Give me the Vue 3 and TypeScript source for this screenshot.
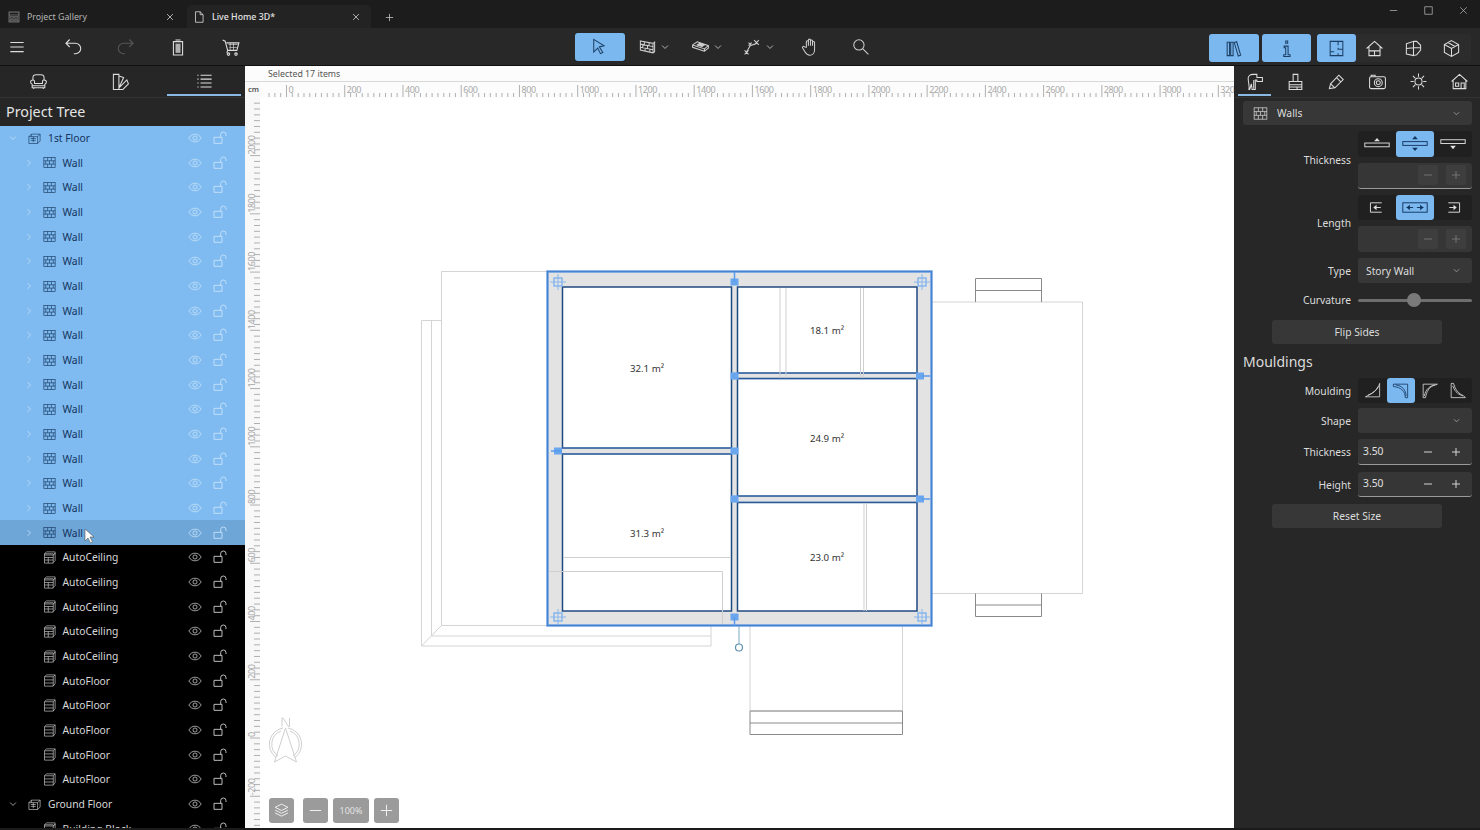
<script setup lang="ts">
interface Row { label: string; icon: string; level: number; chevron: '' | 'down' | 'right'; state: string }
const rows: Row[] = [{ label: '1st Floor', icon: 'floor', level: 0, chevron: 'down', state: 'sel' }]
for (let i = 0; i < 15; i++) rows.push({ label: 'Wall', icon: 'wall', level: 1, chevron: 'right', state: 'sel' })
rows.push({ label: 'Wall', icon: 'wall', level: 1, chevron: 'right', state: 'sel hov' })
for (let i = 0; i < 5; i++) rows.push({ label: 'AutoCeiling', icon: 'ceil', level: 1, chevron: '', state: '' })
for (let i = 0; i < 5; i++) rows.push({ label: 'AutoFloor', icon: 'afloor', level: 1, chevron: '', state: '' })
rows.push({ label: 'Ground Floor', icon: 'floor', level: 0, chevron: 'down', state: '' })
rows.push({ label: 'Building Block', icon: 'ceil', level: 1, chevron: '', state: '' })

const xAt = (cm: number) => 286.5 + cm * 0.2912
const yAt = (cm: number) => 738 - cm * 0.2912
const xTicks: { x: number; major: boolean }[] = []
for (let c = -60; c <= 3260; c += 20) xTicks.push({ x: xAt(c), major: c % 200 === 0 })
const yTicks: { y: number; major: boolean }[] = []
for (let c = -300; c <= 2200; c += 20) yTicks.push({ y: yAt(c), major: c % 200 === 0 })
const xLabels: number[] = []
for (let c = 0; c <= 3200; c += 200) xLabels.push(c)
const yLabels: number[] = []
for (let c = -200; c <= 2000; c += 200) yLabels.push(c)

const areas = [
  { t: '32.1 m²', x: 647, y: 371.5 },
  { t: '31.3 m²', x: 647, y: 536.5 },
  { t: '18.1 m²', x: 827, y: 333.5 },
  { t: '24.9 m²', x: 827, y: 441.5 },
  { t: '23.0 m²', x: 827, y: 561 }
]
const blocks = [
  [734.5, 282], [734.5, 617], [734.5, 376], [920, 376], [734.5, 451], [558, 451], [734.5, 499], [920, 499]
]
const corners = [[558, 282], [922, 282], [558, 617], [922, 617]]
</script>

<template>
  <div class="app">
    <svg class="defs" width="0" height="0">
      <defs>
        <symbol id="menu" viewBox="0 0 24 24"><path d="M4 6.500h16M4 12h16M4 17.500h16" /></symbol>
        <symbol id="undo" viewBox="0 0 24 24"><path d="M8 3L3.500 7.500 8 12M3.500 7.500H15a5.500 5.500 0 0 1 0 12.500h-2" /></symbol>
        <symbol id="redo" viewBox="0 0 24 24"><path d="M16 3l4.500 4.500L16 12M20.500 7.500H9a5.500 5.500 0 0 0 0 12.500h2" /></symbol>
        <symbol id="trash" viewBox="0 0 24 24"><path d="M9 3.500h6M6.500 5.500h11v16h-11z" /><rect x="9" y="8" width="6" height="11" fill="currentColor" stroke="none" opacity=".75" /></symbol>
        <symbol id="cart" viewBox="0 0 24 24"><path d="M2 3.500l3 1.500 3 11h11l2.500-9H6.500M8 16l-1 3" /><circle cx="9" cy="20.500" r="1.500" /><circle cx="18" cy="20.500" r="1.500" /><path d="M9 9h11M10 12.500h9M11 7v9M15 7v9" stroke-width=".8" /></symbol>
        <symbol id="doc" viewBox="0 0 24 24"><path d="M6 3h8l5 5v13H6zM14 3v5h5" /></symbol>
        <symbol id="gallery" viewBox="0 0 24 24"><rect x="3.500" y="3.500" width="17" height="17" /><path d="M3.500 8.500h17M6 11h5v3H6zM13 11h5v3h-5zM6 16h5v2.500H6zM13 16h5v2.500h-5z" stroke-width="1" /></symbol>
        <symbol id="arrow" viewBox="0 0 24 24"><path d="M6 3l13 8-6 1.500 4.500 7-3 1.500-3.500-7L6 19z" /></symbol>
        <symbol id="maxbox" viewBox="0 0 24 24"><rect x="4" y="4" width="16" height="16" /></symbol>
        <symbol id="bricks" viewBox="0 0 24 24"><path d="M3 5l16 3 2-1.500v12L19 20 3 16.500zM19 8v12M3 9l16 3M3 13l16 3M8 6v4M14 7v4M6 10v4M12 11v4M9 14v3M15 15v4" /></symbol>
        <symbol id="slab" viewBox="0 0 24 24"><path d="M2 10l6-4 14 5v3l-5 4-15-5zM2 13l15 5M17 15v3M17 15L2 10M17 15l5-4" /><path d="M8 10l6 2 3-2-6-2z" fill="currentColor" /></symbol>
        <symbol id="nodes" viewBox="0 0 24 24"><path d="M4 20l5-9 9-3M14 4l6 6M20 4l-6 6M2 17l5 5M7 17l-5 5M7 7l4 4M11 7l-4 4" /></symbol>
        <symbol id="hand" viewBox="0 0 24 24"><path d="M8 13V6a1.300 1.300 0 0 1 2.600 0v5-7a1.300 1.300 0 0 1 2.600 0v7-6a1.300 1.300 0 0 1 2.600 0v6-4a1.300 1.300 0 0 1 2.600 0v9c0 4-2.500 7-6 7-3 0-4.500-1.500-6-4l-3-5c-1-1.500 1-3 2.300-1.500z" /></symbol>
        <symbol id="search" viewBox="0 0 24 24"><circle cx="10" cy="10" r="6.500" /><path d="M15 15l7 7" /></symbol>
        <symbol id="library" viewBox="0 0 24 24"><path d="M4 4h3v17H4zM8.500 4h3v17h-3zM13 4.500l3-1 5 17-3 1z" /></symbol>
        <symbol id="info" viewBox="0 0 24 24"><path d="M11 2.500h2.500v3H11zM9 9h5v11h2.500v2h-8v-2H11v-9H9z" /></symbol>
        <symbol id="plan" viewBox="0 0 24 24"><path d="M4 3h16v18H4zM14 3v5M14 11v2h6M4 16h5M14 18v3" /></symbol>
        <symbol id="house" viewBox="0 0 24 24"><path d="M2 12L12 3l10 9M5 10v11h14V10M5 15h14M12 15v6" /></symbol>
        <symbol id="book" viewBox="0 0 24 24"><path d="M3 6l9-3v18l-9-2zM12 3h4l5 5v6l-5 6-4 1M3 12l9-1M12 11h9" /></symbol>
        <symbol id="cube" viewBox="0 0 24 24"><path d="M12 2l9 5v10l-9 5-9-5V7zM3 7l9 5 9-5M12 12v10M7.500 4.500L16.500 9.500" /></symbol>
        <symbol id="chair" viewBox="0 0 24 24"><path d="M5 10V7c0-2 2-3.500 4-3.500h6c2 0 4 1.500 4 3.500v3" /><path d="M5 10c-2 0-3 1.200-3 2.700S3 15 4 15.500V20h16v-4.500c1-.5 2-1.300 2-2.800S21 10 19 10c-1.200 0-2 1-2 2v2.500H7V12c0-1-.8-2-2-2zM4 17.500h16M6 20v1.500M18 20v1.500" /></symbol>
        <symbol id="swatch" viewBox="0 0 24 24"><path d="M3 3h7v19H3zM10 5l6 2-6 13M10 20L20 10l2 5-7 7H3M6.500 18.500h.01" /></symbol>
        <symbol id="list" viewBox="0 0 24 24"><path d="M3 4h1.500M7 4h14M3 9h1.500M7 9h14M3 14h1.500M7 14h14M3 19h1.500M7 19h14" /></symbol>
        <symbol id="tool" viewBox="0 0 24 24"><path d="M4 8c0-3 3-5 6-5h5v4h7v5h-7v-2h-2v12H9l-1-7-2 7H5c1-4-1-9-1-14zM11 10v11" /></symbol>
        <symbol id="stamp" viewBox="0 0 24 24"><path d="M9 3h6v9H9zM4 12h16v4H4zM4 16v6h16v-6M4 19h16M14 19v3" /></symbol>
        <symbol id="pencil" viewBox="0 0 24 24"><path d="M3 21l1.500-6L15 4l5.500 5.500L10 20zM4.500 15l5.500 5M12 7l5.500 5.500" /></symbol>
        <symbol id="camera" viewBox="0 0 24 24"><rect x="2" y="6" width="20" height="15" rx="2" /><circle cx="13" cy="13.500" r="5" /><circle cx="13" cy="13.500" r="2.500" /><path d="M4 6V4h5v2" /></symbol>
        <symbol id="sun" viewBox="0 0 24 24"><circle cx="12" cy="12" r="4.500" /><path d="M12 2v4M12 18v4M2 12h4M18 12h4M5 5l3 3M16 16l3 3M19 5l-3 3M8 16l-3 3" /></symbol>
        <symbol id="cabin" viewBox="0 0 24 24"><path d="M2 12L12 3l10 9M4 11v10h16V11M7 14h4v4H7zM14 14h4v7h-4z" /></symbol>
        <symbol id="wall" viewBox="0 0 24 24"><rect x="3" y="4" width="18" height="16" /><path d="M3 9.300h18M3 14.600h18M9 4v5.300M15 4v5.300M6 9.300v5.300M12 9.300v5.300M18 9.300v5.300M9 14.600V20M15 14.600V20" /></symbol>
        <symbol id="floor" viewBox="0 0 24 24"><path d="M7 5h14v11l-4 4H3V9zM3 9h14v11M17 9l4-4M6 12h8M6 15h8M10 9v9M7 5v4" /></symbol>
        <symbol id="ceil" viewBox="0 0 24 24"><path d="M7 3h14v2l-3 3H4V6zM4 6h14M4 8v13h14V8M18 8l3-3v12l-3 3M4 12h14M4 16h14M10 12v9" /></symbol>
        <symbol id="afloor" viewBox="0 0 24 24"><path d="M7 3h14v14M7 3L4 6v15h14V6H4M18 6l3-3M18 21l3-4M4 11h14M4 16h14" /></symbol>
        <symbol id="eye" viewBox="0 0 24 24"><path d="M1.500 12C4 7.500 8 5.500 12 5.500s8 2 10.500 6.500C20 16.500 16 18.500 12 18.500S4 16.500 1.500 12z" /><circle cx="12" cy="12" r="3.500" /></symbol>
        <symbol id="lock" viewBox="0 0 24 24"><path d="M3 11h12v9H3zM13 11V7a4 4 0 0 1 8 0v2" /></symbol>
        <symbol id="chev-d" viewBox="0 0 24 24"><path d="M5 8.500l7 7 7-7" /></symbol>
        <symbol id="chev-r" viewBox="0 0 24 24"><path d="M8.500 5l7 7-7 7" /></symbol>
        <symbol id="close" viewBox="0 0 24 24"><path d="M5 5l14 14M19 5L5 19" /></symbol>
        <symbol id="plus" viewBox="0 0 24 24"><path d="M12 4v16M4 12h16" /></symbol>
        <symbol id="minus" viewBox="0 0 24 24"><path d="M4 12h16" /></symbol>
        <symbol id="layers" viewBox="0 0 24 24"><path d="M12 3l9 4.500-9 4.500-9-4.500zM3 11.500L12 16l9-4.500M3 15.500L12 20l9-4.500" /></symbol>
        <symbol id="th1" viewBox="0 0 32 16"><rect x="3" y="7.500" width="26" height="4" /><path d="M16 2l3 3.500h-6z" fill="currentColor" stroke="none" /></symbol>
        <symbol id="th2" viewBox="0 0 32 16"><rect x="3" y="6" width="26" height="4" /><path d="M16 0l3 3.500h-6zM16 16l3-3.500h-6z" fill="currentColor" stroke="none" /></symbol>
        <symbol id="th3" viewBox="0 0 32 16"><rect x="3" y="4" width="26" height="4" /><path d="M16 14l3-3.500h-6z" fill="currentColor" stroke="none" /></symbol>
        <symbol id="ln1" viewBox="0 0 32 16"><path d="M21 3H9v10h12M20 8H13" /><path d="M12 8l3.500-3v6z" fill="currentColor" stroke="none" /></symbol>
        <symbol id="ln2" viewBox="0 0 32 16"><rect x="3" y="3" width="26" height="10" /><path d="M7 8h7M18 8h7" /><path d="M7 8l3.500-3v6zM25 8l-3.500-3v6z" fill="currentColor" stroke="none" /></symbol>
        <symbol id="ln3" viewBox="0 0 32 16"><path d="M11 3h12v10H11M12 8h7" /><path d="M20 8l-3.500-3v6z" fill="currentColor" stroke="none" /></symbol>
        <symbol id="m1" viewBox="0 0 24 24"><path d="M3 20h18V3C19 12 11 16 3 20zM6 18c6-2 11-6 13-11" stroke-width="1" /></symbol>
        <symbol id="m2" viewBox="0 0 24 24"><path d="M3 4h18v17h-3c0-8-5-13-15-14zM6 5c8 1 13 6 13 14" stroke-width="1" /></symbol>
        <symbol id="m3" viewBox="0 0 24 24"><path d="M4 21V4h18c-2 2-12 0-15 17zM5.500 19C7 10 13 6 19 5" stroke-width="1" /></symbol>
        <symbol id="m4" viewBox="0 0 24 24"><path d="M4 3v18h18c-2-4-11-3-15-18zM6 6c3 9 8 11 13 13" stroke-width="1" /></symbol>
      </defs>
    </svg>

    <header class="titlebar">
      <div class="tab">
        <svg class="ic s14 dim"><use href="#gallery" /></svg>
        <span class="tab-label">Project Gallery</span>
        <svg class="ic s12 tab-x"><use href="#close" /></svg>
      </div>
      <div class="tab active">
        <svg class="ic s14"><use href="#doc" /></svg>
        <span class="tab-label">Live Home 3D*</span>
        <svg class="ic s12 tab-x"><use href="#close" /></svg>
      </div>
      <svg class="ic s12 new-tab"><use href="#plus" /></svg>
      <div class="win-controls">
        <svg class="ic s12"><use href="#minus" /></svg>
        <svg class="ic s12"><use href="#maxbox" /></svg>
        <svg class="ic s12"><use href="#close" /></svg>
      </div>
    </header>

    <nav class="toolbar">
      <div class="tb-left">
        <svg class="ic s20"><use href="#menu" /></svg>
        <svg class="ic s20"><use href="#undo" /></svg>
        <svg class="ic s20 off"><use href="#redo" /></svg>
        <svg class="ic s20"><use href="#trash" /></svg>
        <svg class="ic s20"><use href="#cart" /></svg>
      </div>
      <div class="tb-center">
        <button class="tbtn on w50"><svg class="ic s18 shift"><use href="#arrow" /></svg></button>
        <div class="tool t1"><svg class="ic s18"><use href="#bricks" /></svg><svg class="ic s10"><use href="#chev-d" /></svg></div>
        <div class="tool t2"><svg class="ic s18"><use href="#slab" /></svg><svg class="ic s10"><use href="#chev-d" /></svg></div>
        <div class="tool t3"><svg class="ic s18"><use href="#nodes" /></svg><svg class="ic s10"><use href="#chev-d" /></svg></div>
        <div class="tool t4"><svg class="ic s18"><use href="#hand" /></svg></div>
        <div class="tool t5"><svg class="ic s18"><use href="#search" /></svg></div>
      </div>
      <div class="tb-right">
        <button class="tbtn on w50"><svg class="ic s18"><use href="#library" /></svg></button>
        <button class="tbtn on w50"><svg class="ic s18"><use href="#info" /></svg></button>
        <div class="view-group">
          <button class="tbtn on w39"><svg class="ic s18"><use href="#plan" /></svg></button>
          <button class="tbtn w39"><svg class="ic s18"><use href="#house" /></svg></button>
          <button class="tbtn w39"><svg class="ic s18"><use href="#book" /></svg></button>
          <button class="tbtn w39"><svg class="ic s18"><use href="#cube" /></svg></button>
        </div>
      </div>
    </nav>

    <main class="body">
      <aside class="left">
        <div class="ptabs three">
          <div class="ptab"><svg class="ic s18"><use href="#chair" /></svg></div>
          <div class="ptab"><svg class="ic s18"><use href="#swatch" /></svg></div>
          <div class="ptab cur"><svg class="ic s18"><use href="#list" /></svg></div>
        </div>
        <h2 class="tree-title">Project Tree</h2>
        <div class="tree">
          <div v-for="(r, i) in rows" :key="i" class="row" :class="[r.state, 'lv' + r.level]">
            <svg v-if="r.chevron" class="ic s10 chev"><use :href="r.chevron === 'down' ? '#chev-d' : '#chev-r'" /></svg>
            <span v-else class="chev"></span>
            <svg class="ic s15 kind"><use :href="'#' + r.icon" /></svg>
            <span class="row-label">{{ r.label }}</span>
            <svg class="ic s14 eye"><use href="#eye" /></svg>
            <svg class="ic s16 lock"><use href="#lock" /></svg>
          </div>
        </div>
        <svg class="cursor" width="12" height="16" viewBox="0 0 12 16"><path d="M1 1v12l3-3 2.500 5 2-1-2.500-5h4z" fill="#fff" stroke="#555" stroke-width=".6" /></svg>
      </aside>

      <section class="canvas">
        <div class="status">Selected 17 items</div>
        <div class="drawing">
          <svg class="sheet" viewBox="245 81 989 747" preserveAspectRatio="none">
            <!-- rulers -->
            <rect x="245" y="81" width="989" height="17" fill="#fcfcfc" />
            <rect x="245" y="81" width="15" height="747" fill="#f8f8f8" />
            <line x1="245" y1="81.500" x2="1234" y2="81.500" stroke="#d8d8d8" />
            <text x="248" y="92" class="cm">cm</text>
            <g stroke="#b0b0b0" stroke-width="1">
              <line v-for="t in xTicks" :key="'x' + t.x" :x1="t.x" :x2="t.x" :y1="t.major ? 85 : 93" y2="97" />
              <line v-for="t in yTicks" v-show="t.y > 98" :key="'y' + t.y" :y1="t.y" :y2="t.y" :x1="t.major ? 250 : 254" x2="260" />
            </g>
            <text v-for="c in xLabels" :key="'lx' + c" :x="xAt(c) + 2" y="92.500" class="rl">{{ c }}</text>
            <g v-for="c in yLabels" :key="'ly' + c" :transform="`translate(255 ${yAt(c) - 1}) rotate(-90)`">
              <text class="rl">{{ c }}</text>
            </g>

            <!-- outside structure -->
            <g fill="none" stroke="#d4d4d4" stroke-width="1">
              <path d="M547 271.500H441.500V625.500H547M441.500 320.500H421.500V646H711V626M431.500 320.500V636H711M421.500 646L441.500 625.500" />
              <path d="M932 302H1082.500V593.500H932" />
              <path d="M750 626V711H902.500V626" />
            </g>
            <g fill="none" stroke="#8a8a8a" stroke-width="1">
              <path d="M975.500 302V278.500H1041.500V302M975.500 290.500H1041.500" />
              <path d="M975.500 593.500V616.500H1041.500V593.500M975.500 605H1041.500" />
              <path d="M750 711H902.500V734.500H750zM750 723H902.500" />
            </g>

            <!-- walls -->
            <rect x="547.500" y="271.500" width="384" height="354" fill="#e3e3e3" />
            <g fill="#fff" stroke="#1f4a80" stroke-width="1.500">
              <rect x="562.500" y="287" width="169" height="161" />
              <rect x="562.500" y="454" width="169" height="157" />
              <rect x="737.500" y="287" width="179.500" height="86" />
              <rect x="737.500" y="378.500" width="179.500" height="117.500" />
              <rect x="737.500" y="502.500" width="179.500" height="108.500" />
            </g>
            <path d="M733 373H916M733 379H916M733 496H916M733 502H916M562 448H731M562 454H731" stroke="#4f8ee0" stroke-width="1" opacity=".5" />
            <g fill="none" stroke="#cfcfcf" stroke-width="1">
              <path d="M780 288V378M786 288V378M860.500 288V378M863.500 288V378M864 503V611M866.500 503V611" />
              <path d="M563 557.500H731M547.500 571.500H722.500V625" />
            </g>
            <rect x="547.500" y="271.500" width="384" height="354" fill="none" stroke="#1f3f70" stroke-width="1" />
            <rect x="547.500" y="271.500" width="384" height="354" fill="none" stroke="#4f8ee0" stroke-width="2.500" opacity=".85" />

            <!-- handles -->
            <g fill="#6aa6ee">
              <rect v-for="(b, i) in blocks" :key="'b' + i" :x="b[0] - 4" :y="b[1] - 3.500" width="8" height="7" />
            </g>
            <path d="M551 451H562M922 376H930M922 499H930M734.500 272V282M734.500 617V626" stroke="#5a9aee" stroke-width="1.500" />
            <g v-for="(b, i) in corners" :key="'c' + i">
              <rect :x="b[0] - 4" :y="b[1] - 4" width="8" height="8" fill="none" stroke="#86b6ee" stroke-width="1.500" />
              <path :d="`M${b[0] - 8} ${b[1]}H${b[0] + 8}M${b[0]} ${b[1] - 8}V${b[1] + 8}`" stroke="#86b6ee" stroke-width="1" />
            </g>
            <line x1="739" y1="626" x2="739" y2="644" stroke="#7ea9c4" />
            <circle cx="739" cy="647.500" r="3.500" fill="#fff" stroke="#5f8fae" stroke-width="1.200" />

            <text v-for="a in areas" :key="a.t" :x="a.x" :y="a.y" class="area">{{ a.t }}</text>

            <!-- compass -->
            <g fill="none" stroke="#cfcfcf" stroke-width="1">
              <path d="M283 728A16.500 16.500 0 0 0 276 757.500M288 728A16.500 16.500 0 0 1 295 757.500" />
              <path d="M281 731A14 14 0 0 0 278 755.800M290 731A14 14 0 0 1 293 755.800" />
              <path d="M285.500 728L274.500 762L285.500 756L296.500 762Z" />
              <path d="M282 726.500V718H283L288.500 726.500H289.500V718" />
            </g>
          </svg>

          <div class="zoom-bar">
            <button class="zb"><svg class="ic s18"><use href="#layers" /></svg></button>
            <button class="zb gap"><svg class="ic s18"><use href="#minus" /></svg></button>
            <button class="zb pct">100%</button>
            <button class="zb"><svg class="ic s18"><use href="#plus" /></svg></button>
          </div>
        </div>
      </section>

      <aside class="right">
        <div class="ptabs six">
          <div class="ptab cur"><svg class="ic s18"><use href="#tool" /></svg></div>
          <div class="ptab"><svg class="ic s18"><use href="#stamp" /></svg></div>
          <div class="ptab"><svg class="ic s18"><use href="#pencil" /></svg></div>
          <div class="ptab"><svg class="ic s18"><use href="#camera" /></svg></div>
          <div class="ptab"><svg class="ic s18"><use href="#sun" /></svg></div>
          <div class="ptab"><svg class="ic s18"><use href="#cabin" /></svg></div>
        </div>
        <div class="props">
          <div class="select wide">
            <svg class="ic s16 wall-i"><use href="#wall" /></svg>
            <span>Walls</span>
            <svg class="ic s10 sel-c"><use href="#chev-d" /></svg>
          </div>

          <div class="form two m6">
            <label>Thickness</label>
            <div class="stack">
              <div class="seg three">
                <button><svg class="ic b24"><use href="#th1" /></svg></button>
                <button class="on"><svg class="ic b24"><use href="#th2" /></svg></button>
                <button><svg class="ic b24"><use href="#th3" /></svg></button>
              </div>
              <div class="field under">
                <span class="val"></span>
                <span class="pm dis"><svg class="ic s12"><use href="#minus" /></svg></span>
                <span class="pm dis"><svg class="ic s12"><use href="#plus" /></svg></span>
              </div>
            </div>
          </div>

          <div class="form two m6">
            <label>Length</label>
            <div class="stack">
              <div class="seg three">
                <button><svg class="ic b24"><use href="#ln1" /></svg></button>
                <button class="on"><svg class="ic b24"><use href="#ln2" /></svg></button>
                <button><svg class="ic b24"><use href="#ln3" /></svg></button>
              </div>
              <div class="field">
                <span class="val"></span>
                <span class="pm dis"><svg class="ic s12"><use href="#minus" /></svg></span>
                <span class="pm dis"><svg class="ic s12"><use href="#plus" /></svg></span>
              </div>
            </div>
          </div>

          <div class="form m6">
            <label>Type</label>
            <div class="select h25"><span>Story Wall</span><svg class="ic s10 sel-c"><use href="#chev-d" /></svg></div>
          </div>

          <div class="form m5 h24">
            <label>Curvature</label>
            <div class="slider"><span class="thumb"></span></div>
          </div>

          <button class="action m8">Flip Sides</button>
          <h3 class="section">Mouldings</h3>

          <div class="form m4">
            <label>Moulding</label>
            <div class="seg four">
              <button><svg class="ic s18 thin"><use href="#m1" /></svg></button>
              <button class="on"><svg class="ic s18 thin"><use href="#m2" /></svg></button>
              <button><svg class="ic s18 thin"><use href="#m3" /></svg></button>
              <button><svg class="ic s18 thin"><use href="#m4" /></svg></button>
            </div>
          </div>

          <div class="form m5">
            <label>Shape</label>
            <div class="select h25"><span></span><svg class="ic s10 sel-c"><use href="#chev-d" /></svg></div>
          </div>

          <div class="form m6">
            <label>Thickness</label>
            <div class="field under">
              <span class="val">3.50</span>
              <span class="pm"><svg class="ic s12"><use href="#minus" /></svg></span>
              <span class="pm"><svg class="ic s12"><use href="#plus" /></svg></span>
            </div>
          </div>

          <div class="form m7">
            <label>Height</label>
            <div class="field under f25">
              <span class="val">3.50</span>
              <span class="pm"><svg class="ic s12"><use href="#minus" /></svg></span>
              <span class="pm"><svg class="ic s12"><use href="#plus" /></svg></span>
            </div>
          </div>

          <button class="action m7">Reset Size</button>
        </div>
      </aside>
    </main>
    <div class="foot"></div>
  </div>
</template>

<style scoped>
.app {
  width: 1480px;
  height: 830px;
  overflow: hidden;
  display: flex;
  flex-direction: column;
  background: #262626;
  color: #e6e6e6;
  font-family: "Noto Sans", "Open Sans", sans-serif;
  font-size: 10.300px;
}
.defs { position: absolute; }
button { font: inherit; color: inherit; border: 0; padding: 0; background: none; display: flex; align-items: center; justify-content: center; }
.ic { display: block; fill: none; stroke: currentColor; stroke-width: 1.3; flex: none; }
.s10 { width: 10px; height: 10px; stroke-width: 2; }
.s12 { width: 12px; height: 12px; stroke-width: 1.8; }
.s14 { width: 14px; height: 14px; }
.s15 { width: 15px; height: 15px; }
.s16 { width: 16px; height: 16px; }
.s18 { width: 19px; height: 19px; }
.s20 { width: 20px; height: 20px; }
.b24 { width: 30px; height: 15px; stroke-width: 1; }
.thin { stroke-width: 1; }
.dim { opacity: .8; }

.titlebar { height: 28px; flex: none; background: #1c1c1c; display: flex; align-items: flex-end; position: relative; }
.tab { width: 184px; height: 23px; margin-left: 2px; display: flex; align-items: center; padding: 0 6px 0 5px; box-sizing: border-box; color: #b5b5b5; }
.tab:first-child { margin-left: 0; width: 185px; padding-left: 7px; }
.tab.active { background: #232323; border-radius: 5px 5px 0 0; color: #e4e4e4; }
.tab-label { margin-left: 6px; font-size: 8.800px; flex: 1; }
.tab.active .tab-label { font-weight: 500; }
.tab-x { width: 10px; height: 10px; margin-right: 4px; color: #ddd; }
.new-tab { margin: 0 0 5px 13px; width: 11px; height: 11px; color: #bbb; }
.win-controls { position: absolute; top: 5px; right: 11px; display: flex; gap: 24px; color: #ccc; }
.win-controls .ic { width: 11px; height: 11px; stroke-width: 1.4; }

.toolbar { height: 38px; flex: none; background: #282828; display: flex; align-items: center; position: relative; border-bottom: 1px solid #111; box-sizing: border-box; }
.tb-left { display: flex; gap: 32.500px; margin-left: 7px; color: #ddd; width: 568px; flex: none; }
.tb-left .ic:nth-child(2) { margin-left: 3.500px; }
.tb-left .off { color: #555; }
.tb-center { display: flex; align-items: center; color: #cfcfcf; }
.tool { display: flex; align-items: center; gap: 3px; flex: none; }
.t1 { margin-left: 13px; }
.t2 { margin-left: 21px; }
.t3 { margin-left: 20px; }
.t4 { margin-left: 25px; }
.t5 { margin-left: 32px; }
.tbtn { height: 28px; border-radius: 3px; color: #ddd; flex: none; }
.tbtn.on { background: #7ab8ef; color: #1d3f66; }
.shift { margin-right: 3px; }
.w50 { width: 49.500px; }
.w39 { width: 38.500px; }
.tb-right { position: absolute; right: 9px; top: 6px; display: flex; gap: 3px; }
.view-group { display: flex; background: #2c2c2c; border-radius: 3px; margin-left: 3px; }

.body { flex: 1; min-height: 0; display: flex; }
.foot { height: 2px; flex: none; background: #1a1a1a; }
.left { width: 245px; flex: none; display: flex; flex-direction: column; position: relative; overflow: hidden; background: #262626; }
.ptabs { height: 31px; flex: none; display: flex; border-bottom: 1px solid #333; box-sizing: content-box; color: #ddd; }
.ptab { flex: 1; margin: 0 4px; display: flex; align-items: center; justify-content: center; box-sizing: border-box; padding-top: 3px; border-bottom: 2px solid transparent; height: 30px; }
.ptab.cur { border-bottom-color: #8ab9e4; }
.three .ptab:not(.cur) .ic { margin-right: 4px; }
.tree-title { margin: 0; height: 27.700px; flex: none; padding-left: 6px; font-size: 14.300px; font-weight: 400; line-height: 28px; color: #e4e4e4; }
.tree { flex: 1; min-height: 0; background: #000; overflow: hidden; }
.row { height: 24.680px; display: flex; align-items: center; color: #d8d8d8; box-sizing: border-box; }
.row.sel { background: #7fbbf0; color: #14335c; }
.row.hov { background: #6ea6d8; }
.row.lv0 { padding-left: 8px; }
.row.lv1 { padding-left: 24px; }
.chev { width: 10px; height: 10px; flex: none; color: #b8b8b8; }
.sel .chev { color: #c4e0f8; }
.kind { margin-left: 8px; stroke-width: 1; }
.lv0 .kind { margin-left: 9px; }
.row-label { margin-left: 5.500px; flex: 1; line-height: 14px; }
.lv0 .row-label { margin-left: 6px; }
.eye { position: absolute; left: 188px; color: #cfcfcf; }
.lock { position: absolute; left: 212px; color: #d8d8d8; }
.sel .eye, .sel .lock { color: #cbe4fa; }
.cursor { position: absolute; left: 84px; top: 462px; }

.canvas { flex: 1; min-width: 0; display: flex; flex-direction: column; background: #fff; }
.status { height: 15px; flex: none; background: #fcfcfc; color: #555; font-size: 8.800px; line-height: 17px; padding-left: 23px; }
.drawing { flex: 1; min-height: 0; position: relative; }
.sheet { position: absolute; inset: 0; width: 100%; height: 100%; display: block; }
.rl { font-size: 9px; letter-spacing: -.4px; fill: #a8a8a8; font-family: "Noto Sans", sans-serif; }
.cm { font-size: 7.500px; font-weight: 600; fill: #555; font-family: "Noto Sans", sans-serif; }
.area { font-size: 9.700px; fill: #333; text-anchor: middle; font-family: "Noto Sans", sans-serif; }
.zoom-bar { position: absolute; left: 24px; bottom: 5px; display: flex; gap: 5px; }
.zb { width: 25px; height: 25px; background: #9b9b9b; color: #f0f0f0; border-radius: 3px; }
.zb.gap { margin-left: 4px; }
.zb.pct { width: 36px; font-size: 9px; color: #e2e2e2; }
.zb .ic { width: 17px; height: 17px; stroke-width: 1.400; }

.right { width: 246px; flex: none; background: #272727; }
.props { display: flex; flex-direction: column; padding: 3px 8px 0 9px; }
.select { height: 24px; background: #373737; border-radius: 3px; display: flex; align-items: center; padding: 0 11px 0 8px; color: #ddd; }
.select.h25 { height: 25px; flex: 1; }
.select span { flex: 1; }
.wall-i { margin-right: 8px; margin-left: 1px; width: 17px; height: 17px; stroke-width: 1; }
.sel-c { color: #aaa; width: 9px; height: 9px; }
.form { display: grid; grid-template-columns: 1fr 114px; column-gap: 7px; align-items: center; }
.form label { text-align: right; color: #dcdcdc; }
.m4 { margin-top: 4px; }
.m5 { margin-top: 5px; }
.m6 { margin-top: 6px; }
.m7 { margin-top: 7px; }
.m8 { margin-top: 8px; }
.h24 { height: 24px; }
.stack { display: flex; flex-direction: column; gap: 6px; }
.seg { height: 25.500px; display: flex; background: #202020; border-radius: 3px; color: #e0e0e0; }
.seg.four { height: 25px; }
.seg button { flex: 1; border-radius: 3px; color: inherit; }
.seg button.on { background: #7ab8ef; color: #12335e; }
.field { height: 26px; background: #363636; border-radius: 3px; display: flex; align-items: center; padding: 0 6px 0 5px; box-sizing: border-box; gap: 8px; }
.field.f25 { height: 25px; }
.field.under { border-bottom: 1px solid #9a9a9a; }
.val { flex: 1; color: #e0e0e0; padding-bottom: 2px; }
.pm { width: 20px; height: 20px; display: flex; align-items: center; justify-content: center; color: #e4e4e4; }
.pm.dis { background: #3e3e3e; border-radius: 2px; color: #777; }
.slider { height: 3px; background: #6e6e6e; border-radius: 2px; position: relative; }
.thumb { position: absolute; left: 49px; top: -6px; width: 14px; height: 14px; border-radius: 50%; background: #7a7a7a; box-sizing: border-box; }
.action { width: 170px; height: 24px; align-self: center; flex: none; background: #373737; border-radius: 3px; color: #dcdcdc; margin-left: -1px; }
.section { margin: 6px 0 0 0; height: 24px; line-height: 24px; font-size: 14px; font-weight: 400; color: #dcdcdc; }
</style>
